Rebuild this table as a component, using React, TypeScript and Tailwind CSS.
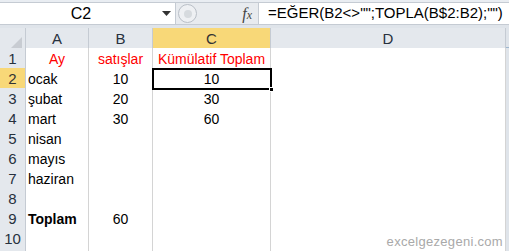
const cols = ["A", "B", "C", "D"];

type Cell = { text?: string; align?: "left" | "center"; red?: boolean; bold?: boolean };

const rows: Cell[][] = [
  [{ text: "Ay", align: "center", red: true }, { text: "satışlar", align: "center", red: true }, { text: "Kümülatif Toplam", align: "center", red: true }, {}],
  [{ text: "ocak" }, { text: "10", align: "center" }, { text: "10", align: "center" }, {}],
  [{ text: "şubat" }, { text: "20", align: "center" }, { text: "30", align: "center" }, {}],
  [{ text: "mart" }, { text: "30", align: "center" }, { text: "60", align: "center" }, {}],
  [{ text: "nisan" }, {}, {}, {}],
  [{ text: "mayıs" }, {}, {}, {}],
  [{ text: "haziran" }, {}, {}, {}],
  [{}, {}, {}, {}],
  [{ text: "Toplam", bold: true }, { text: "60", align: "center" }, {}, {}],
  [{}, {}, {}, {}],
];

const grid = "grid grid-cols-[26px_63px_64px_118px_235px]";

export default function App() {
  return (
    <div className="w-[509px] h-[251px] overflow-hidden bg-[#dfe4ea] font-['Liberation_Sans',Arial,sans-serif] relative">
      {/* formula bar */}
      <div className="h-[3px] bg-[#e9edf2] border-b border-[#c5cbd3]" />
      <div className="flex h-[22px] bg-white border-b border-[#c5cbd3]">
        <div className="w-[175px] flex items-center pr-[4px]">
          <span className="flex-1 text-center text-[16px] text-black">C2</span>
          <svg width="9" height="5" viewBox="0 0 9 5">
            <path d="M0 0h9L4.5 5z" fill="#333" />
          </svg>
        </div>
        <div className="w-[83px] bg-[#e8ebef] flex items-center pl-[2px] pr-[6px] border-l border-[#c5cbd3]">
          <div className="w-[19px] h-[19px] rounded-full bg-[#eef0f3] border border-[#b9bfc7] flex items-center justify-center">
            <div className="w-[8px] h-[8px] rounded-full bg-[#d6dade]" />
          </div>
          <span className="ml-auto italic font-['Liberation_Serif',serif] text-[16px] text-[#444]">
            f<span className="text-[12px]">x</span>
          </span>
        </div>
        <div className="flex-1 flex items-center border-l border-[#c5cbd3] pl-[9px] text-[15px] text-black whitespace-nowrap">
          =EĞER(B2&lt;&gt;"";TOPLA(B$2:B2);"")
        </div>
      </div>
      <div className="h-[3px] bg-[#dfe4ea]" />

      {/* header row */}
      <div className={`${grid} h-[20px] border-b border-[#9eb6ce]`}>
        <div className="flex items-end justify-end p-[3px] bg-[#e4e8ed] border-r border-[#c5cbd3]">
          <svg width="11" height="11" viewBox="0 0 11 11">
            <path d="M11 0V11H0z" fill="#c8ccd2" />
          </svg>
        </div>
        {cols.map((c) => (
          <div
            key={c}
            className={`flex items-center justify-center text-[15px] border-r border-[#c5cbd3] ${
              c === "C" ? "bg-[#f8d878] text-[#333]" : "bg-[#e4e8ed] text-[#27313e]"
            }`}
          >
            {c}
          </div>
        ))}
      </div>

      {/* rows */}
      {rows.map((r, i) => (
        <div key={i} className={`${grid} h-[20px]`}>
          <div
            className={`flex items-center justify-center text-[15px] border-r border-b border-[#c5cbd3] ${
              i === 1 ? "bg-[#f8d878] text-[#333]" : "bg-[#e4e8ed] text-[#27313e]"
            }`}
          >
            {i + 1}
          </div>
          {r.map((cell, j) => (
            <div
              key={j}
              className={`bg-white border-r border-b border-[#d4d4d4] flex items-center text-[14px] whitespace-nowrap ${
                cell.align === "center" ? "justify-center" : "pl-[2px]"
              } ${cell.red ? "text-[#ff0000]" : "text-black"} ${cell.bold ? "font-bold" : ""}`}
            >
              {cell.text}
            </div>
          ))}
        </div>
      ))}

      {/* selection box on C2 */}
      <div className="absolute left-[152px] top-[68px] w-[120px] h-[22px] border-[2px] border-black pointer-events-none" />
      <div className="absolute left-[269px] top-[87px] w-[5px] h-[5px] bg-black border border-white" />

      {/* watermark */}
      <div className="absolute right-[6px] top-[232px] text-[13px] text-[#a9a9a9] tracking-[0.3px]">excelgezegeni.com</div>
    </div>
  );
}
